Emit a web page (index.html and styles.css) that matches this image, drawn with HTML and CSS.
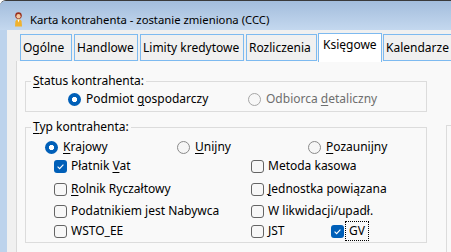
FILE: index.html
```html
<!DOCTYPE html>
<html lang="pl">
<head>
<meta charset="utf-8">
<title>Karta kontrahenta</title>
<link rel="stylesheet" href="styles.css">
</head>
<body>
<div class="window">
  <div class="titlebar">
    <svg class="app-icon" width="9" height="15" viewBox="0 0 9 15">
      <ellipse cx="4.5" cy="3.6" rx="3.3" ry="3.4" fill="#9a2f1c"/>
      <ellipse cx="4.5" cy="4.3" rx="2.1" ry="2.3" fill="#f3c9a2"/>
      <path d="M1 14.5 L1.4 9.5 Q1.8 7.8 3.4 7.6 L5.6 7.6 Q7.2 7.8 7.6 9.5 L8 14.5 Z" fill="#f0b22e"/>
      <path d="M3.6 7.8 L4.5 10.5 L5.4 7.8 Z" fill="#ffffff"/>
    </svg>
    <span class="title">Karta kontrahenta - zostanie zmieniona (CCC)</span>
  </div>
  <div class="client">
    <div class="tabs">
      <div class="tab tab-ogolne">Ogólne</div>
      <div class="tab tab-handlowe">Handlowe</div>
      <div class="tab tab-limity">Limity kredytowe</div>
      <div class="tab tab-rozliczenia">Rozliczenia</div>
      <div class="tab tab-ksiegowe active">Księgowe</div>
      <div class="tab tab-kalendarze">Kalendarze</div>
    </div>
    <div class="page">
      <div class="groups">
        <div class="group group-status">
          <div class="legend"><u>S</u>tatus kontrahenta:</div>
          <div class="row status-row">
            <div class="cell cell-status"><span class="radio checked"></span><span>Podmiot <u>g</u>ospodarczy</span></div>
            <div class="cell disabled"><span class="radio"></span><span>Odbiorca <u>d</u>etaliczny</span></div>
          </div>
        </div>
        <div class="group group-typ">
          <div class="legend"><u>T</u>yp kontrahenta:</div>
          <div class="row radio-row">
            <div class="cell cell-r1"><span class="radio checked"></span><span><u>K</u>rajowy</span></div>
            <div class="cell cell-r2"><span class="radio"></span><span><u>U</u>nijny</span></div>
            <div class="cell"><span class="radio"></span><span><u>P</u>ozaunijny</span></div>
          </div>
          <div class="row check-row row-2">
            <div class="cell cell-c1"><span class="check checked"><svg width="13" height="13" viewBox="0 0 13 13"><path d="M3.6 6.7 L5.6 8.6 L9.4 4.6" fill="none" stroke="#fff" stroke-width="1.1"/></svg></span><span>Płatnik <u>V</u>at</span></div>
            <div class="cell"><span class="check"></span><span>Metoda kasowa</span></div>
          </div>
          <div class="row check-row row-3">
            <div class="cell cell-c1"><span class="check"></span><span><u>R</u>olnik Ryczałtowy</span></div>
            <div class="cell"><span class="check"></span><span><u>J</u>ednostka powiązana</span></div>
          </div>
          <div class="row check-row row-4">
            <div class="cell cell-c1"><span class="check"></span><span>Podatnikiem jest Nabywca</span></div>
            <div class="cell"><span class="check"></span><span>W likwidacji/upadł.</span></div>
          </div>
          <div class="row check-row row-5">
            <div class="cell cell-c1"><span class="check"></span><span>WSTO_EE</span></div>
            <div class="cell cell-c2"><span class="check"></span><span>JST</span></div>
            <div class="cell"><span class="check checked"><svg width="13" height="13" viewBox="0 0 13 13"><path d="M3.6 6.7 L5.6 8.6 L9.4 4.6" fill="none" stroke="#fff" stroke-width="1.1"/></svg></span><span class="focused">GV</span></div>
          </div>
        </div>
      </div>
      <div class="side-box"></div>
    </div>
  </div>
</div>
</body>
</html>
```

FILE: styles.css
```css
* { box-sizing: border-box; }

html, body {
  margin: 0;
  padding: 0;
  background: #ffffff;
}

body {
  width: 451px;
  height: 252px;
  overflow: hidden;
  font-family: "Noto Sans", "Open Sans", sans-serif;
  font-size: 12px;
  line-height: 16px;
  color: #000;
}

u {
  text-decoration: underline;
  text-decoration-thickness: 1px;
  text-underline-offset: 2px;
}

.window {
  width: 451px;
  height: 252px;
  display: flex;
  flex-direction: column;
  background: #bdd3ec;
  border-top: 1px solid #3a3a3a;
  border-top-left-radius: 6px;
  overflow: hidden;
}

.titlebar {
  height: 29px;
  flex: none;
  display: flex;
  align-items: flex-start;
  padding: 11px 0 0 14px;
  background: linear-gradient(#a3bddc, #c4d8ef);
}

.app-icon {
  margin-right: 7px;
  flex: none;
}

.title {
  font-size: 11.3px;
  line-height: 16px;
  white-space: nowrap;
}

.client {
  flex: 1;
  margin-left: 7px;
  background: #f0f0f0;
  display: flex;
  flex-direction: column;
  min-height: 0;
}

.tabs {
  display: flex;
  align-items: flex-end;
  gap: 2px;
  padding: 3px 0 0 13px;
  white-space: nowrap;
}

.tab {
  flex: none;
  height: 27px;
  border: 1px solid #7dbaf0;
  background: #f0f0f0;
  padding: 5px 0 0 2px;
  overflow: hidden;
}

.tab-ogolne { width: 52px; }
.tab-handlowe { width: 64px; }
.tab-limity { width: 104px; }
.tab-rozliczenia { width: 71px; }
.tab-ksiegowe { width: 62px; }
.tab-kalendarze { width: 80px; }

.tab.active {
  height: 29px;
  width: 64px;
  margin: 0 -1px -1px -1px;
  background: #ffffff;
  border-bottom: none;
  padding: 3px 0 0 4px;
  position: relative;
  z-index: 1;
}

.page {
  flex: 1;
  margin-left: 9px;
  background: #f9f9f9;
  border-left: 1px solid #d9d9d9;
  display: flex;
  align-items: flex-start;
  padding-left: 8px;
}

.groups {
  width: 402px;
  flex: none;
}

.group {
  border: 1px solid #dcdcdc;
}

.group-status {
  margin-top: 20px;
  padding-bottom: 4px;
}

.group-typ {
  margin-top: 15px;
  padding-bottom: 3px;
}

.legend {
  width: fit-content;
  margin: -9px 0 0 5px;
  padding: 0 2px;
  background: #f9f9f9;
  line-height: 16px;
}

.row {
  display: flex;
  height: 16px;
  white-space: nowrap;
}

.cell {
  display: flex;
  align-items: center;
  flex: none;
}

.status-row {
  margin-top: 2px;
  padding-left: 42px;
}

.cell-status { width: 180px; }

.radio-row {
  margin-top: 4px;
  padding-left: 19px;
}

.cell-r1 { width: 132px; }
.cell-r2 { width: 131px; }

.check-row { padding-left: 28px; }
.row-2 { margin-top: 3px; }
.row-3 { margin-top: 7px; }
.row-4 { margin-top: 6px; }
.row-5 { margin-top: 4px; }

.cell-c1 { width: 197px; }
.cell-c2 { width: 80px; }

.radio {
  width: 13px;
  height: 13px;
  flex: none;
  border-radius: 50%;
  border: 1px solid #8a8a8a;
  background: #f6f6f6;
  margin-right: 5px;
}

.radio.checked {
  border: none;
  background: radial-gradient(circle, #ffffff 0 2.4px, #005fb8 2.9px);
}

.disabled { color: #6e6e6e; }
.disabled .radio {
  border-color: #a6a6a6;
  background: #f7f7f7;
}

.check {
  width: 13px;
  height: 13px;
  flex: none;
  border-radius: 3px;
  border: 1px solid #646464;
  background: #f7f7f7;
  margin-right: 4px;
  display: block;
}

.check.checked {
  border: none;
  background: #005fb8;
}

.check svg { display: block; }

.focused {
  outline: 1px dotted #000;
  outline-offset: 2px;
  padding: 0 1px;
  line-height: 14px;
}

.side-box {
  flex: 1;
  margin: 64px 0 0 19px;
  height: 200px;
  border-left: 1px solid #dcdcdc;
  border-top: 1px solid #dcdcdc;
}
```
